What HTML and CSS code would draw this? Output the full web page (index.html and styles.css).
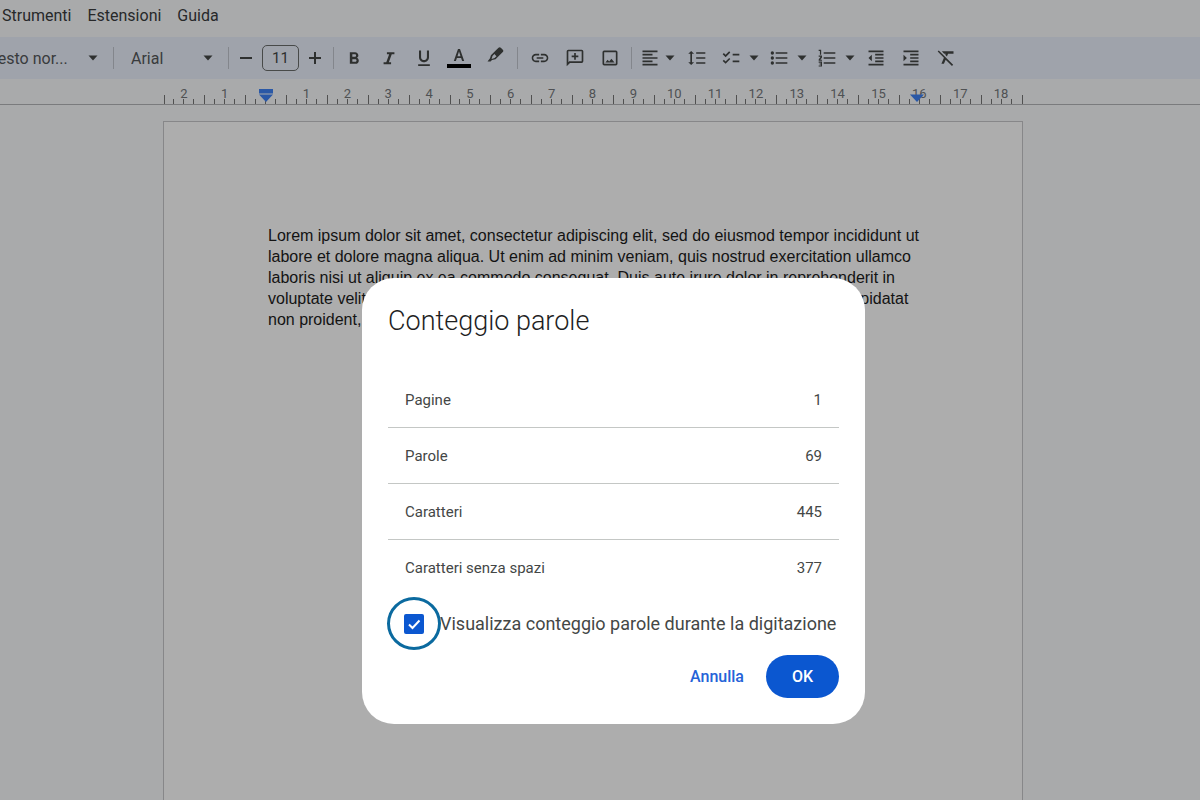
FILE: index.html
```html
<!DOCTYPE html>
<html lang="it">
<head>
<meta charset="utf-8">
<meta name="viewport" content="width=device-width, initial-scale=1">
<title>Conteggio parole</title>
<link rel="stylesheet" href="styles.css">
</head>
<body>
<svg class="defs" aria-hidden="true">
  <symbol id="caret" viewBox="0 0 12 12"><path d="M1.500 3.500h9L6 8.500z"/></symbol>
</svg>
<div class="app">
  <nav class="menu" aria-label="Menu">
    <button type="button">Strumenti</button>
    <button type="button">Estensioni</button>
    <button type="button">Guida</button>
  </nav>
  <div class="toolbar" role="toolbar" aria-label="Formattazione">
    <label class="pick pick-style"><select aria-label="Stile"><option>Testo nor...</option></select><svg class="caret"><use href="#caret"/></svg></label>
    <span class="sep"></span>
    <label class="pick pick-font"><select aria-label="Carattere"><option>Arial</option></select><svg class="caret"><use href="#caret"/></svg></label>
    <span class="sep"></span>
    <div class="size">
      <button type="button" aria-label="Riduci"><svg viewBox="0 0 20 20"><path d="M4 9h12v2H4z"/></svg></button>
      <input type="text" value="11" aria-label="Dimensione carattere">
      <button type="button" aria-label="Aumenta"><svg viewBox="0 0 20 20"><path d="M9 4h2v5h5v2h-5v5H9v-5H4V9h5z"/></svg></button>
    </div>
    <span class="sep"></span>
    <div class="group group-text">
      <button class="tool" type="button" aria-label="Grassetto"><svg viewBox="0 0 24 24"><path d="M15.600 11.790c.97-.67 1.650-1.770 1.650-2.790 0-2.260-1.750-4-4-4H7v14h7.040c2.090 0 3.710-1.700 3.710-3.790 0-1.520-.86-2.820-2.150-3.420zM10 7.500h3c.83 0 1.500.67 1.500 1.500s-.67 1.500-1.500 1.500h-3v-3zm3.500 9H10v-3h3.500c.83 0 1.500.67 1.500 1.500s-.67 1.500-1.500 1.500z"/></svg></button>
      <button class="tool" type="button" aria-label="Corsivo"><svg viewBox="0 0 24 24"><path d="M9.500 5v2.600h2.700L8.700 17H5.500v2.600h9V17h-2.700l3.500-9.400h3.200V5z"/></svg></button>
      <button class="tool" type="button" aria-label="Sottolineato"><svg viewBox="0 0 24 24"><path d="M12 17c3.310 0 6-2.690 6-6V3h-2.500v8c0 1.930-1.570 3.500-3.500 3.500S8.500 12.930 8.500 11V3H6v8c0 3.310 2.690 6 6 6zm-7 2.500v2h14v-2z"/></svg></button>
      <button class="tool" type="button" aria-label="Colore testo"><svg class="wide" viewBox="0 0 24 22"><path d="M11 2 6.800 14h2.100l1-2.900h4.200l1 2.900h2.100L13 2zm-.5 7.300L12 4.400l1.500 4.900z"/><path class="ink" d="M0 17h24v4H0z"/></svg></button>
      <button class="tool" type="button" aria-label="Evidenziatore"><svg class="pen" viewBox="0 0 18 18"><path fill-rule="evenodd" d="M12.500 1.800c.7-.7 1.600-.7 2.300 0l2 2c.7.700.7 1.600 0 2.300L9.500 13.300 6 14 4.500 15.500H1.500L4 12.300 4.900 9.300zM6.500 10l-.9 3 3-.9 1.900-1.900-2.100-2.100z"/></svg></button>
    </div>
    <span class="sep"></span>
    <div class="group">
      <button class="tool" type="button" aria-label="Inserisci link"><svg viewBox="0 0 24 24"><path d="M3.900 12c0-1.710 1.390-3.100 3.100-3.100h4V7H7c-2.760 0-5 2.240-5 5s2.240 5 5 5h4v-1.900H7c-1.710 0-3.100-1.390-3.100-3.100zM8 13h8v-2H8v2zm9-6h-4v1.900h4c1.710 0 3.100 1.390 3.100 3.100s-1.390 3.100-3.100 3.100h-4V17h4c2.760 0 5-2.240 5-5s-2.240-5-5-5z"/></svg></button>
      <button class="tool" type="button" aria-label="Aggiungi commento"><svg viewBox="0 0 24 24"><path fill-rule="evenodd" d="M4 2h16a2 2 0 0 1 2 2v12a2 2 0 0 1-2 2H6l-4 4V4a2 2 0 0 1 2-2zm0 2v13l1-1h15V4zm7 2h2v3h3v2h-3v3h-2v-3H8V9h3z"/></svg></button>
      <button class="tool" type="button" aria-label="Inserisci immagine"><svg viewBox="0 0 24 24"><path fill-rule="evenodd" d="M5 3h14a2 2 0 0 1 2 2v14a2 2 0 0 1-2 2H5a2 2 0 0 1-2-2V5a2 2 0 0 1 2-2zm0 2v14h14V5zm1.500 12.500 2.600-3.300 1.900 2 2.700-3.200 3.800 4.500z"/></svg></button>
    </div>
    <span class="sep"></span>
    <div class="group">
      <button class="tool tool-drop tool-align" type="button" aria-label="Allinea"><svg viewBox="0 0 24 24"><path d="M3 3h18v2H3zm0 4h12v2H3zm0 4h18v2H3zm0 4h12v2H3zm0 4h18v2H3z"/></svg><svg class="caret"><use href="#caret"/></svg></button>
      <button class="tool" type="button" aria-label="Interlinea"><svg viewBox="0 0 24 24"><path d="M6 7h2.500L5 3.500 1.500 7H4v10H1.500L5 20.500 8.500 17H6zm5-2v2h11V5zm0 14h11v-2H11zm0-6h11v-2H11z"/></svg></button>
      <button class="tool tool-drop" type="button" aria-label="Elenco di controllo"><svg viewBox="0 0 24 24"><path d="M22 7h-8v2h8zm0 8h-8v2h8zM5.540 11 2 7.460l1.410-1.410 2.120 2.120 4.240-4.240 1.410 1.410zm0 8L2 15.460l1.410-1.410 2.120 2.120 4.240-4.240 1.410 1.410z"/></svg><svg class="caret"><use href="#caret"/></svg></button>
      <button class="tool tool-drop" type="button" aria-label="Elenco puntato"><svg viewBox="0 0 24 24"><path d="M8 5h14v2H8zm0 6h14v2H8zm0 6h14v2H8z"/><circle cx="4" cy="6" r="2"/><circle cx="4" cy="12" r="2"/><circle cx="4" cy="18" r="2"/></svg><svg class="caret"><use href="#caret"/></svg></button>
      <button class="tool tool-drop" type="button" aria-label="Elenco numerato"><svg viewBox="0 0 24 24"><path d="M8 5h14v2H8zm0 6h14v2H8zm0 6h14v2H8zM2 2h3v6H3.500V3.500H2zm0 7h4v2.500L4 14h2v1.300H2v-1.500l2.300-3.300H2zm0 7.300h4v6H2V21h2.600v-1.100H3v-1.200h1.600v-1.100H2z"/></svg><svg class="caret"><use href="#caret"/></svg></button>
      <button class="tool" type="button" aria-label="Riduci rientro"><svg viewBox="0 0 24 24"><path d="M3 3h18v2H3zm8 4h10v2H11zm0 4h10v2H11zm0 4h10v2H11zm-8 4h18v2H3zm0-7 4-4v8z"/></svg></button>
      <button class="tool" type="button" aria-label="Aumenta rientro"><svg viewBox="0 0 24 24"><path d="M3 3h18v2H3zm8 4h10v2H11zm0 4h10v2H11zm0 4h10v2H11zm-8 4h18v2H3zM3 8l4 4-4 4z"/></svg></button>
      <button class="tool" type="button" aria-label="Cancella formattazione"><svg viewBox="0 0 24 24"><path d="M3.300 3 2 4.300l7.500 7.400L6.500 19h3l2.100-5 7.600 7.600 1.400-1.400L3.300 3zM7 4l2.200 2.200L10 7h1.600l-.5 1.200 2 2L14.500 7H21V4z"/></svg></button>
    </div>
  </div>
  <div class="ruler">
    <div class="scale">
      <span class="cm">2</span><span class="cm">1</span><span class="cm zero"><svg class="marker" viewBox="0 0 14 14"><path d="M0 0h14v4.500H0zM0 5.500h14L7 13z"/></svg></span><span class="cm">1</span><span class="cm">2</span><span class="cm">3</span><span class="cm">4</span><span class="cm">5</span><span class="cm">6</span><span class="cm">7</span><span class="cm">8</span><span class="cm">9</span><span class="cm">10</span><span class="cm">11</span><span class="cm">12</span><span class="cm">13</span><span class="cm">14</span><span class="cm">15</span><span class="cm">16<svg class="marker marker-end" viewBox="0 0 14 14"><path d="M0 5.500h14L7 13z"/></svg></span><span class="cm">17</span><span class="cm">18</span>
    </div>
  </div>
  <main class="canvas">
    <article class="sheet">
      <p>Lorem ipsum dolor sit amet, consectetur adipiscing elit, sed do eiusmod tempor incididunt ut labore et dolore magna aliqua. Ut enim ad minim veniam, quis nostrud exercitation ullamco laboris nisi ut aliquip ex ea commodo consequat. Duis aute irure dolor in reprehenderit in voluptate velit esse cillum dolore eu fugiat nulla pariatur. Excepteur sint occaecat cupidatat non proident, sunt in culpa qui officia deserunt mollit anim id est laborum.</p>
    </article>
  </main>
</div>
<div class="scrim">
  <section class="dialog" role="dialog" aria-modal="true" aria-labelledby="title">
    <h1 id="title">Conteggio parole</h1>
    <table>
      <tr><th scope="row">Pagine</th><td>1</td></tr>
      <tr><th scope="row">Parole</th><td>69</td></tr>
      <tr><th scope="row">Caratteri</th><td>445</td></tr>
      <tr><th scope="row">Caratteri senza spazi</th><td>377</td></tr>
    </table>
    <div class="option">
      <span class="ring"><input id="live" type="checkbox" checked><svg class="tick" viewBox="0 0 20 20"><path d="M5 10.500 8.500 14 15.500 6.500"/></svg></span>
      <label for="live">Visualizza conteggio parole durante la digitazione</label>
    </div>
    <div class="actions">
      <button class="cancel" type="button">Annulla</button>
      <button class="ok" type="button">OK</button>
    </div>
  </section>
</div>
</body>
</html>
```
FILE: styles.css
```css
* { box-sizing: border-box; }
body {
  margin: 0;
  font-family: Roboto, "Liberation Sans", sans-serif;
  color: #444746;
}
button, select, input { font: inherit; color: inherit; }
button {
  padding: 0;
  border: 0;
  background: none;
}
svg { fill: currentColor; flex: none; }
.defs { display: none; }

.app {
  display: flex;
  flex-direction: column;
  height: 100vh;
  overflow: hidden;
  background: #f9fbfd;
}
.menu {
  display: flex;
  gap: 16px;
  height: 37px;
  padding: 0 2px 6px;
  font-size: 16px;
  color: #3a3c3d;
}

.toolbar {
  display: flex;
  align-items: center;
  height: 42px;
  background: #ebf1fd;
  font-size: 16px;
}
.sep {
  width: 1px;
  height: 22px;
  margin: 0 4px;
  background: #c1c6cf;
}
.caret { width: 12px; height: 12px; }
.pick {
  display: flex;
  align-items: center;
  justify-content: space-between;
  color: #55585a;
}
.pick select {
  appearance: none;
  padding: 0;
  border: 0;
  background: none;
  outline: 0;
}
.pick .caret { color: #444746; }
.pick-style { width: 110px; margin: 0 10px 0 -11px; }
.pick-font { width: 83px; margin: 0 10px 0 13px; }
.size {
  display: flex;
  align-items: center;
  gap: 6px;
  padding: 0 4px 0 3px;
}
.size button { display: flex; }
.size svg { width: 20px; height: 20px; }
.size input {
  width: 37px;
  height: 26px;
  padding: 0;
  border: 1px solid #6a6d6c;
  border-radius: 5px;
  background: none;
  text-align: center;
  font-size: 15px;
}
.group { display: flex; align-items: center; }
.group-text { margin: 0 2px 0 -2px; }
.tool {
  display: flex;
  align-items: center;
  justify-content: center;
  width: 35px;
  height: 30px;
}
.tool svg { width: 20px; height: 20px; }
.tool .wide { width: 24px; height: 22px; }
.tool .caret { width: 12px; height: 12px; margin-left: 7px; }
.tool-drop { width: 48px; justify-content: flex-start; padding-left: 7px; }
.tool-align { width: 43px; padding-left: 4px; }
.tool-align .caret { margin-left: 4px; }
.tool .pen { width: 18px; height: 18px; margin: 0 0 6px 2px; }
.ink { fill: #000; }

.ruler {
  display: flex;
  justify-content: center;
  height: 26px;
  padding-right: 14px;
  border-bottom: 1px solid #b4b6b8;
}
.scale {
  display: grid;
  grid-template-columns: repeat(21, 1fr);
  width: 859px;
  border-right: 1px solid transparent;
  background: linear-gradient(#777, #777) 100% 100% / 1px 9px no-repeat border-box;
}
.cm {
  position: relative;
  padding-top: 8px;
  text-align: center;
  font-size: 13px;
  line-height: 14px;
  color: #75787b;
  background:
    linear-gradient(#777, #777) 0 100% / 1px 9px no-repeat,
    linear-gradient(#777, #777) 25% 100% / 1px 5px no-repeat,
    linear-gradient(#777, #777) 50% 100% / 1px 5px no-repeat,
    linear-gradient(#777, #777) 75% 100% / 1px 5px no-repeat;
}
.marker {
  position: absolute;
  left: 14px;
  top: 10px;
  width: 14px;
  height: 14px;
  fill: #3f82f5;
}
.marker-end { left: 11px; }

.canvas {
  flex: 1;
  display: flex;
  justify-content: center;
  padding: 16px 14px 0 0;
}
.sheet {
  width: 860px;
  padding: 103px 100px 103px 104px;
  border: 1px solid #c7c8ca;
  border-bottom: 0;
  background: #fff;
}
.sheet p {
  margin: 0;
  font: 16px/21px "Liberation Sans", Arial, sans-serif;
  color: #1c1c1c;
}

.scrim {
  position: fixed;
  inset: 0;
  display: grid;
  justify-items: center;
  align-items: start;
  padding: 278px 0 0 27px;
  background: rgba(0, 0, 0, .32);
}
.dialog {
  width: 503px;
  padding: 26px;
  border-radius: 32px;
  background: #fff;
  color: #444746;
}
.dialog h1 {
  margin: 0 0 33px;
  font-size: 27px;
  font-weight: 300;
  line-height: 34px;
  color: #1f1f1f;
}
.dialog table { width: 100%; border-collapse: collapse; }
.dialog tr { border-bottom: 1px solid #c4c7c5; }
.dialog tr:last-child { border: 0; }
.dialog th, .dialog td {
  height: 56px;
  padding: 2px 17px 0;
  font-size: 15px;
  font-weight: 400;
  text-align: left;
}
.dialog td { text-align: right; }
.option {
  display: flex;
  align-items: center;
  margin: 2px 0 5px;
  font-size: 18px;
  white-space: nowrap;
}
.ring {
  position: relative;
  display: grid;
  place-items: center;
  width: 54px;
  height: 53px;
  margin: 0 -1px;
  border: 3px solid #0b6a9f;
  border-radius: 50%;
}
.ring input {
  appearance: none;
  width: 20px;
  height: 20px;
  margin: 0;
  border-radius: 2px;
  background: #0b57d0;
}
.tick {
  position: absolute;
  width: 20px;
  height: 20px;
  fill: none;
  stroke: #fff;
  stroke-width: 2;
  pointer-events: none;
}
.actions {
  display: flex;
  justify-content: flex-end;
  gap: 22px;
  font-size: 16px;
  font-weight: 500;
}
.cancel { color: #2563d8; }
.ok {
  width: 73px;
  height: 43px;
  border-radius: 22px;
  background: #0b57d0;
  color: #fff;
}
```
